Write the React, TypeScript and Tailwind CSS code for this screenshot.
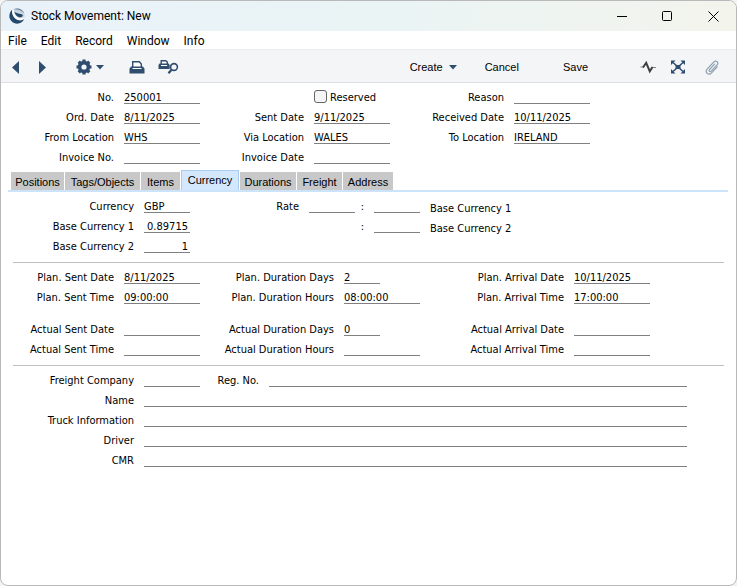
import { useId, useState } from "react";
import clsx from "clsx";

interface FieldProps {
  label: string;
  labelClass: string;
  inputClass?: string;
  className?: string;
  value?: string;
}

const inputStyle =
  "h-[15px] min-w-0 rounded-none border-b border-[#808080] bg-transparent pt-0.5 text-[11px] leading-3 text-black outline-none focus:border-[#2f4e6f]";

const Field = ({ label, labelClass, inputClass = "w-[76px]", className, value = "" }: FieldProps) => {
  const id = useId();
  return (
    <div className={clsx("flex h-5 items-end gap-2.5", className)}>
      <label htmlFor={id} className={clsx("shrink-0 text-right leading-3 whitespace-nowrap", labelClass)}>
        {label}
      </label>
      <input id={id} type="text" defaultValue={value} className={clsx(inputStyle, inputClass)} />
    </div>
  );
};

const Logo = () => (
  <svg viewBox="0 0 16 16" className="size-4">
    <circle cx="8" cy="8" r="7.7" fill="#c9d5df" />
    <path d="M3.2 1.800C.8 4-.1 7 .7 10.300 2 14 5.500 15.900 9 15.600c3-.3 5.300-2.200 6.300-4.800-2.600 1.900-5.800 2-8.300.2C4 9 2.700 5.600 3.200 1.800Z" fill="#24496c" />
    <path d="M3.200 1.800C2.700 5.600 4 9 7 11c2.500 1.800 5.700 1.700 8.300-.2l.4-1.800c-2.300 1.500-4.900 1.500-7 .2C5.900 7.500 4.500 5 5 2Z" fill="#fff" />
    <path d="M5.500 3.600c1.500 2.300 5.500 1.600 8.300 3.400-.1 1.900-1.700 2.600-3.600 2.200C7.800 8.700 5.800 6.500 5.500 3.600Z" fill="#24496c" />
    <path d="M4.500 1.400C8-.6 13.500.8 15.300 5.500 12.500 2.200 8 .9 4.500 1.400Z" fill="#5f7b94" />
  </svg>
);

const Caret = () => (
  <svg viewBox="0 0 8 5" className="h-[5px] w-2" fill="#2f4e6f">
    <path d="M0 0h8L4 4.600Z" />
  </svg>
);

const Gear = () => (
  <svg viewBox="0 0 16 16" className="size-4" fill="none" stroke="#2f4e6f">
    <circle cx="8" cy="8" r="4.400" strokeWidth="3.600" />
    <path d="M8 .5v2.500M8 13v2.500M.5 8H3M13 8h2.500M2.700 2.700l1.800 1.800M11.500 11.500l1.800 1.800M2.700 13.300l1.800-1.800M11.500 4.500l1.800-1.800" strokeWidth="3.200" />
  </svg>
);

const Printer = () => (
  <svg viewBox="0 0 16 14" className="h-3.5 w-4">
    <path d="M3.700 7V1.700h6.600L12.300 4v3" fill="#fff" stroke="#2f4e6f" strokeWidth="1.400" />
    <path d="M2 6.500h12l1.500 2.300V13.500H.5V8.800Z" fill="#2f4e6f" />
    <path d="M3.500 8.500h9" stroke="#fff" />
  </svg>
);

const PrintPreview = () => (
  <svg viewBox="0 0 22 16" className="h-4 w-[22px]" fill="none">
    <path d="M3.200 5V1.700h4.600L9.300 3v2" fill="#fff" stroke="#2f4e6f" strokeWidth="1.400" />
    <path d="M1.500 4.500h9.200l1 1.500v4H.5V6Z" fill="#2f4e6f" />
    <path d="M3 6.500h6.200" stroke="#fff" />
    <circle cx="16" cy="8" r="3.400" stroke="#2f4e6f" strokeWidth="1.600" />
    <path d="m13.500 10.800-3 3.500" stroke="#2f4e6f" strokeWidth="2.200" />
  </svg>
);

const Activity = () => (
  <svg viewBox="0 0 16 14" className="h-3.5 w-4" fill="none">
    <path d="M.5 7h3.500M12 7.500h4" stroke="#888" />
    <path d="m3 7.500 3.200-4.700 3.600 8.500L12.500 7" stroke="#3f3f3f" strokeWidth="2" />
  </svg>
);

const Expand = () => (
  <svg viewBox="0 0 14 14" className="size-3.5">
    <path d="M0 .5h4.500L0 5ZM14 .5H9.500L14 5ZM0 13.500h4.500L0 9ZM14 13.500H9.500L14 9Z" fill="#2f4e6f" />
    <path d="m2 2.500 10 9M12 2.500l-10 9" stroke="#2f4e6f" strokeWidth="1.500" />
    <rect x="4.500" y="5" width="5" height="4" fill="#2f4e6f" />
  </svg>
);

const Clip = () => (
  <svg viewBox="0 0 14 15" className="h-[15px] w-3.5" fill="none" stroke="#8c9eb0" strokeWidth="1.200" strokeLinecap="round">
    <path d="M9.500 4.200 4.500 9.600c-1 1.200.6 2.600 1.700 1.500l5.900-6.300c2-2.300-1-5.100-3.200-2.900L2.300 8.900c-3 3.400 1.200 7.200 4.300 4l5.600-6" />
  </svg>
);

const menus = ["File", "Edit", "Record", "Window", "Info"];

const tabs = [
  { name: "Positions", width: "w-[53px]" },
  { name: "Tags/Objects", width: "w-[75px]" },
  { name: "Items", width: "w-[39px]" },
  { name: "Currency", width: "w-[58px]" },
  { name: "Durations", width: "w-[56px]" },
  { name: "Freight", width: "w-[45px]" },
  { name: "Address", width: "w-[50px]" },
];

const TitleBar = () => (
  <header className="flex h-[30px] items-center bg-linear-to-r from-[#e9f2f9] via-[#eaf4f5] to-[#f3f4ec] pl-2 font-['Roboto',sans-serif] text-xs">
    <Logo />
    <h1 className="ml-1.5">Stock Movement: New</h1>
    <div className="ml-auto flex">
      <button aria-label="Minimize" className="flex w-11 justify-center">
        <svg viewBox="0 0 11 11" className="size-[11px]" stroke="#000"><path d="M0 5.500h10" /></svg>
      </button>
      <button aria-label="Maximize" className="flex w-[46px] justify-center">
        <svg viewBox="0 0 11 11" className="size-[11px]" fill="none" stroke="#000"><rect x=".5" y=".5" width="9" height="9" rx="1" /></svg>
      </button>
      <button aria-label="Close" className="flex w-[46px] justify-center">
        <svg viewBox="0 0 11 11" className="size-[11px]" stroke="#000"><path d="m.5.500 10 10M10.500.500l-10 10" /></svg>
      </button>
    </div>
  </header>
);

const Toolbar = () => (
  <div className="flex h-[34px] items-center border-y border-t-[#ededef] border-b-[#dcdee1] bg-[#f4f5f7] pt-0.5 pr-[17px] pl-[11px] font-['Liberation_Sans',sans-serif]">
    <button aria-label="Previous record">
      <svg viewBox="0 0 7 13" className="h-[13px] w-[7px]" fill="#2f4e6f"><path d="M7 0v13L0 6.500Z" /></svg>
    </button>
    <button aria-label="Next record" className="ml-5">
      <svg viewBox="0 0 7 13" className="h-[13px] w-[7px]" fill="#2f4e6f"><path d="M0 0v13l7-6.500Z" /></svg>
    </button>
    <button aria-label="Settings" className="ml-[30px] flex items-center gap-1"><Gear /><Caret /></button>
    <button aria-label="Print" className="ml-[25px]"><Printer /></button>
    <button aria-label="Print preview" className="ml-[13px]"><PrintPreview /></button>
    <button className="ml-auto flex items-center gap-1.5">Create <Caret /></button>
    <button className="ml-7">Cancel</button>
    <button className="ml-11">Save</button>
    <button aria-label="Activity" className="ml-[52px]"><Activity /></button>
    <button aria-label="Expand" className="ml-[15px]"><Expand /></button>
    <button aria-label="Attachments" className="ml-5"><Clip /></button>
  </div>
);

const RateRow = ({ n }: { n: number }) => (
  <>
    <span className="w-[15px] text-center leading-3">:</span>
    <input id={`base-rate-${n}`} type="text" className={clsx(inputStyle, "ml-1 w-[46px]")} />
    <label htmlFor={`base-rate-${n}`} className="ml-2.5 leading-2">Base Currency {n}</label>
  </>
);

const App = () => {
  const [active, setActive] = useState("Currency");

  return (
    <div className="min-h-screen bg-[#f3f3f3] font-['DejaVu_Sans_Condensed','DejaVu_Sans',sans-serif] text-[11px] text-black">
      <main className="min-h-screen overflow-hidden rounded-lg border border-[#b9b9b9] bg-white">
        <TitleBar />
        <nav className="flex h-[18px] items-center gap-3.5 pt-0.5 pl-[7px] font-['Roboto',sans-serif] text-xs">
          {menus.map((menu) => (
            <button key={menu}>{menu}</button>
          ))}
        </nav>
        <Toolbar />

        <section className="pt-px pl-[9px]">
          <div className="flex">
            <Field label="No." labelClass="w-[104px]" value="250001" />
            <label className="ml-[114px] flex h-5 w-[76px] items-end gap-[3px] leading-3">
              <input
                type="checkbox"
                className="mb-px size-[13px] shrink-0 appearance-none rounded-[3px] border border-[#666] bg-[#f5f5f5] checked:bg-[#2f4e6f]"
              />
              Reserved
            </label>
            <Field label="Reason" labelClass="w-[114px]" />
          </div>
          <div className="flex">
            <Field label="Ord. Date" labelClass="w-[104px]" value="8/11/2025" />
            <Field label="Sent Date" labelClass="w-[104px]" value="9/11/2025" />
            <Field label="Received Date" labelClass="w-[114px]" value="10/11/2025" />
          </div>
          <div className="flex">
            <Field label="From Location" labelClass="w-[104px]" value="WHS" />
            <Field label="Via Location" labelClass="w-[104px]" value="WALES" />
            <Field label="To Location" labelClass="w-[114px]" value="IRELAND" />
          </div>
          <div className="flex">
            <Field label="Invoice No." labelClass="w-[104px]" />
            <Field label="Invoice Date" labelClass="w-[104px]" />
          </div>
        </section>

        <div
          role="tablist"
          className="mt-1.5 mr-2 ml-[7px] flex items-end gap-px border-b-2 border-[#cce4fb] pl-[3px] font-['Liberation_Sans',sans-serif]"
        >
          {tabs.map(({ name, width }) => (
            <button
              key={name}
              role="tab"
              aria-selected={active === name}
              onClick={() => setActive(name)}
              className={clsx(
                "shrink-0 whitespace-nowrap",
                width,
                active === name ? "h-5 border border-b-0 border-[#a9cdf0] bg-[#d3e8fc]" : "h-[18px] bg-[#c8c8c8] pt-0.5",
              )}
            >
              {name}
            </button>
          ))}
        </div>

        <section className="pt-px pl-[9px]">
          <div className="flex items-end">
            <Field label="Currency" labelClass="w-[124px]" inputClass="w-[46px]" value="GBP" />
            <Field label="Rate" labelClass="w-[109px]" inputClass="w-[46px]" />
            <RateRow n={1} />
          </div>
          <div className="flex items-end">
            <Field label="Base Currency 1" labelClass="w-[124px]" inputClass="w-[46px] pr-0.5 text-right" value="0.89715" />
            <span className="w-[165px]" />
            <RateRow n={2} />
          </div>
          <Field label="Base Currency 2" labelClass="w-[124px]" inputClass="w-[46px] pr-0.5 text-right" value="1" />
        </section>

        <hr className="mt-[9px] mr-3 ml-3 border-[#c0c0c0]" />

        <section className="pt-px pl-[9px]">
          <div className="flex">
            <Field label="Plan. Sent Date" labelClass="w-[104px]" value="8/11/2025" />
            <Field label="Plan. Duration Days" labelClass="w-[134px]" inputClass="w-9" value="2" />
            <Field label="Plan. Arrival Date" labelClass="w-[144px]" value="10/11/2025" className="ml-10" />
          </div>
          <div className="flex">
            <Field label="Plan. Sent Time" labelClass="w-[104px]" value="09:00:00" />
            <Field label="Plan. Duration Hours" labelClass="w-[134px]" value="08:00:00" />
            <Field label="Plan. Arrival Time" labelClass="w-[144px]" value="17:00:00" />
          </div>
          <div className="mt-3 flex">
            <Field label="Actual Sent Date" labelClass="w-[104px]" />
            <Field label="Actual Duration Days" labelClass="w-[134px]" inputClass="w-9" value="0" />
            <Field label="Actual Arrival Date" labelClass="w-[144px]" className="ml-10" />
          </div>
          <div className="flex">
            <Field label="Actual Sent Time" labelClass="w-[104px]" />
            <Field label="Actual Duration Hours" labelClass="w-[134px]" />
            <Field label="Actual Arrival Time" labelClass="w-[144px]" />
          </div>
        </section>

        <hr className="mt-[9px] mr-3 ml-3 border-[#c0c0c0]" />

        <section className="pt-px pr-[49px] pb-8 pl-[9px]">
          <div className="flex">
            <Field label="Freight Company" labelClass="w-[124px]" inputClass="w-14" />
            <Field label="Reg. No." labelClass="w-[59px]" inputClass="flex-1" className="flex-1" />
          </div>
          <Field label="Name" labelClass="w-[124px]" inputClass="flex-1" />
          <Field label="Truck Information" labelClass="w-[124px]" inputClass="flex-1" />
          <Field label="Driver" labelClass="w-[124px]" inputClass="flex-1" />
          <Field label="CMR" labelClass="w-[124px]" inputClass="flex-1" />
        </section>
      </main>
    </div>
  );
};

export default App;
